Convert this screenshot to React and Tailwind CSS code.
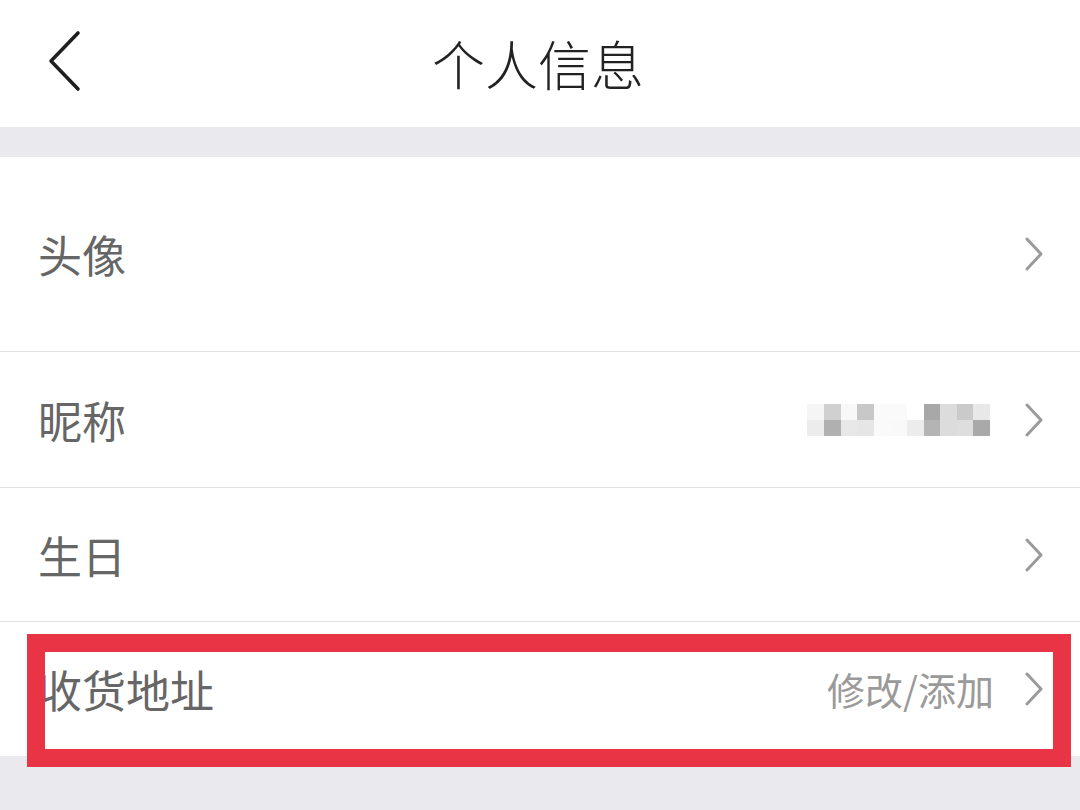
const font = { fontFamily: '"Noto Sans CJK SC", "Noto Sans", sans-serif' };

function IconBack() {
  return (
    <svg width="40" height="62" viewBox="0 0 40 62" fill="none" stroke="#1f1f1f" strokeWidth="3.6" strokeLinecap="round" strokeLinejoin="round" aria-hidden="true">
      <polyline points="36,3 9,31 36,59" />
    </svg>
  );
}

function IconNext() {
  return (
    <svg width="20" height="34" viewBox="0 0 20 34" fill="none" stroke="#9a9a9a" strokeWidth="3" strokeLinecap="round" strokeLinejoin="round" aria-hidden="true">
      <polyline points="3,2 17,17 3,32" />
    </svg>
  );
}

const mosaic = [
  ['#f5f5f5', '#d0d0d0', '#f8f8f8', '#c8c8c8', '#fafafa', '#fafafa', '#ffffff', '#a8a8a8', '#dcdcdc', '#cacaca', '#e8e8e8'],
  ['#ececec', '#b0b0b0', '#e8e8e8', '#e6e6e6', '#fafafa', '#f9f9f9', '#ececec', '#b4b4b4', '#dcdcdc', '#dedede', '#a9a9a9'],
];

function Mosaic() {
  return (
    <div className="flex flex-col">
      {mosaic.map((row, i) => (
        <div key={i} className="flex">
          {row.map((c, j) => (
            <div key={j} className="h-[16px] w-[16.6px]" style={{ backgroundColor: c }} />
          ))}
        </div>
      ))}
    </div>
  );
}

function Row({ label, height, right, last }) {
  return (
    <div className={`flex items-center justify-between bg-white pl-[38px] pr-[36px] ${last ? '' : 'border-b border-[#e2e2e2]'} ${height}`}>
      <span className="text-[44px] leading-none text-[#666666]">{label}</span>
      <div className="flex items-center">
        {right}
        <IconNext />
      </div>
    </div>
  );
}

export default function App() {
  return (
    <div className="relative h-[810px] w-[1080px] overflow-hidden bg-[#e9e9ee]" style={font}>
      {/* Header */}
      <header className="relative flex h-[127px] items-center justify-center bg-white">
        <div className="absolute left-[42px] top-[30px]">
          <IconBack />
        </div>
        <h1 className="pr-[4px] text-[53px] font-light leading-none text-[#222222]">个人信息</h1>
      </header>

      <div className="h-[30px]" />

      <Row label="头像" height="h-[195px]" />
      <Row
        label="昵称"
        height="h-[136px]"
        right={<div className="mr-[34px]"><Mosaic /></div>}
      />
      <Row label="生日" height="h-[134px]" />
      <Row
        label="收货地址"
        height="h-[134px]"
        last
        right={<span className="mr-[30px] text-[38px] leading-none text-[#9a9a9a]">修改/添加</span>}
      />

      {/* Annotation box */}
      <div className="pointer-events-none absolute left-[27px] top-[634px] h-[133px] w-[1044px] border-[18px] border-[#e93446]" />
    </div>
  );
}
